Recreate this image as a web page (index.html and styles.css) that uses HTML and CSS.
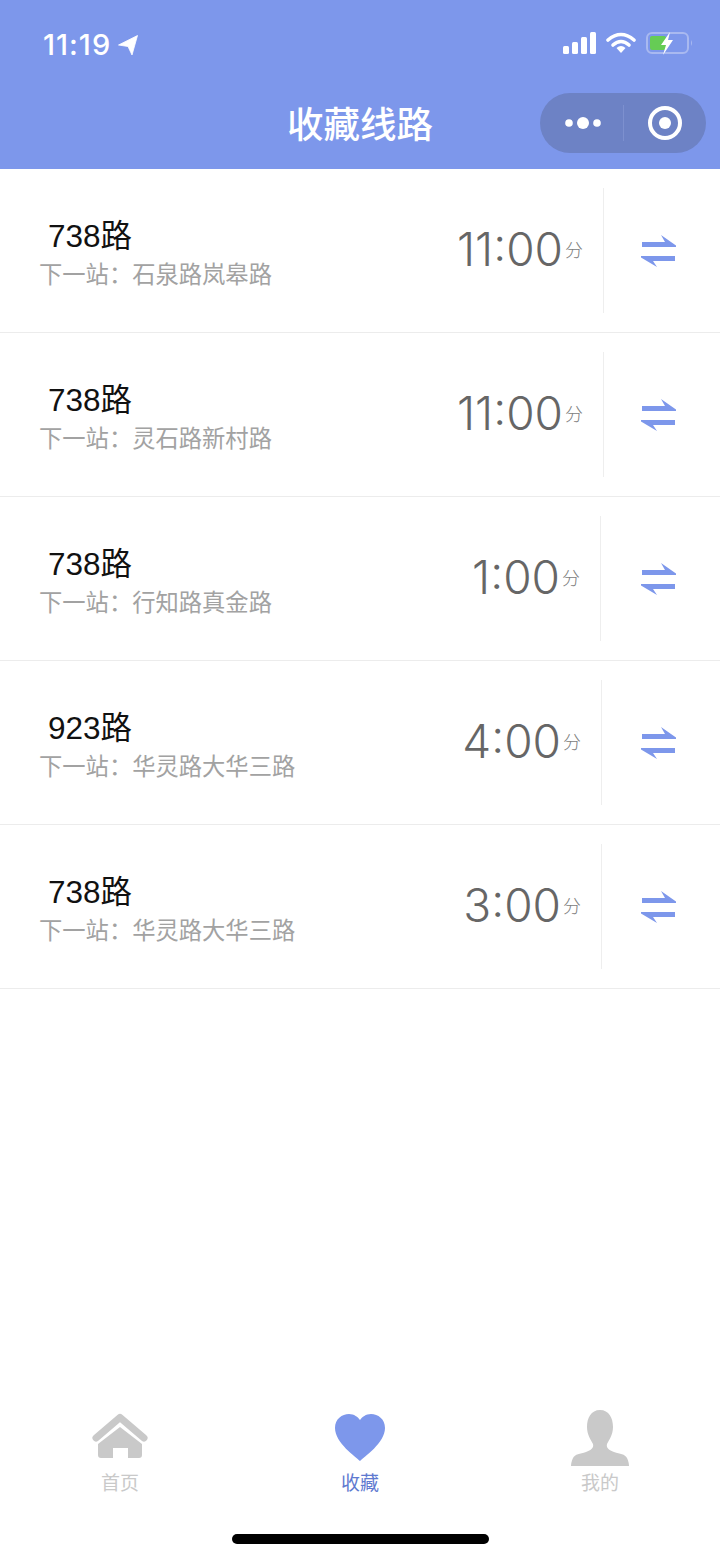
FILE: index.html
```html
<!DOCTYPE html>
<html lang="zh-CN">
<head>
<meta charset="utf-8">
<title>收藏线路</title>
<link rel="stylesheet" href="styles.css">
</head>
<body>
<div class="page">
  <header class="header">
    <div class="status">
      <div class="status-left">
        <span class="clock">11:19</span>
        <svg class="loc" width="20" height="20" viewBox="0 0 20 20"><path d="M19.500 0.500 L0.500 10 L10 11.500 L14 20 Z" fill="#fff" stroke="#fff" stroke-width="0.800" stroke-linejoin="round"/></svg>
      </div>
      <div class="status-right">
        <svg width="34" height="22" viewBox="0 0 34 22"><rect x="0" y="14" width="6" height="8" rx="1.500" fill="#fff"/><rect x="9" y="10" width="6" height="12" rx="1.500" fill="#fff"/><rect x="18" y="5" width="6" height="17" rx="1.500" fill="#fff"/><rect x="27" y="0" width="6" height="22" rx="1.500" fill="#fff"/></svg>
        <svg width="30" height="22" viewBox="0 0 30 22"><path d="M2 8 Q15 -3 28 8" fill="none" stroke="#fff" stroke-width="3.600" stroke-linecap="round"/><path d="M7 13 Q15 6 23 13" fill="none" stroke="#fff" stroke-width="3.600" stroke-linecap="round"/><path d="M10.500 16 Q15 12 19.500 16 L15 21 Z" fill="#fff"/></svg>
        <svg width="48" height="24" viewBox="0 0 48 24"><rect x="2" y="2" width="41" height="20" rx="5" fill="none" stroke="#a9b9f0" stroke-width="2"/><rect x="5" y="5" width="16" height="14" rx="2" fill="#66cc55"/><path d="M46 9 Q48 12 46 15 Z" fill="#a9b9f0"/><path d="M25 1 L16 14 L21 14 L18 24 L28 9 L23 9 Z" fill="#fff"/></svg>
      </div>
    </div>
    <div class="nav">
      <h1 class="nav-title">收藏线路</h1>
      <div class="capsule">
        <div class="capsule-cell">
          <svg class="dots" width="38" height="14" viewBox="0 0 38 14"><circle cx="5" cy="7" r="3.800" fill="#fff"/><circle cx="19" cy="7" r="6" fill="#fff"/><circle cx="33" cy="7" r="3.800" fill="#fff"/></svg>
        </div>
        <span class="capsule-line"></span>
        <div class="capsule-cell">
          <svg width="36" height="36" viewBox="0 0 36 36"><circle cx="18" cy="18" r="15" fill="none" stroke="#fff" stroke-width="4"/><circle cx="18" cy="18" r="6" fill="#fff"/></svg>
        </div>
      </div>
    </div>
  </header>

  <main class="list">
    <div class="row">
      <div class="info"><div class="line-name">738路</div><div class="next">下一站：石泉路岚皋路</div></div>
      <div class="time"><span class="num">11:00</span><span class="unit">分</span></div>
      <div class="swap swap-a"><svg class="swap-icon" width="38" height="34" viewBox="0 0 38 34"><use href="#swap"/></svg></div>
    </div>
    <div class="row">
      <div class="info"><div class="line-name">738路</div><div class="next">下一站：灵石路新村路</div></div>
      <div class="time"><span class="num">11:00</span><span class="unit">分</span></div>
      <div class="swap swap-a"><svg class="swap-icon" width="38" height="34" viewBox="0 0 38 34"><use href="#swap"/></svg></div>
    </div>
    <div class="row">
      <div class="info"><div class="line-name">738路</div><div class="next">下一站：行知路真金路</div></div>
      <div class="time"><span class="num">1:00</span><span class="unit">分</span></div>
      <div class="swap swap-b"><svg class="swap-icon" width="38" height="34" viewBox="0 0 38 34"><use href="#swap"/></svg></div>
    </div>
    <div class="row">
      <div class="info"><div class="line-name">923路</div><div class="next">下一站：华灵路大华三路</div></div>
      <div class="time"><span class="num">4:00</span><span class="unit">分</span></div>
      <div class="swap swap-c"><svg class="swap-icon" width="38" height="34" viewBox="0 0 38 34"><use href="#swap"/></svg></div>
    </div>
    <div class="row">
      <div class="info"><div class="line-name">738路</div><div class="next">下一站：华灵路大华三路</div></div>
      <div class="time"><span class="num">3:00</span><span class="unit">分</span></div>
      <div class="swap swap-c"><svg class="swap-icon" width="38" height="34" viewBox="0 0 38 34"><use href="#swap"/></svg></div>
    </div>
  </main>

  <nav class="tabs">
    <div class="tab">
      <svg width="60" height="56" viewBox="0 0 60 56"><path d="M6 28 L30 7.500 L54 28" fill="none" stroke="#c9c9c9" stroke-width="7" stroke-linecap="round" stroke-linejoin="round"/><path d="M30 17 L52 34 V45 Q52 48 49 48 H38 V38 H23 V48 H11 Q8 48 8 45 V34 Z" fill="#c9c9c9"/></svg>
      <span class="tab-label">首页</span>
    </div>
    <div class="tab tab-on">
      <svg width="60" height="56" viewBox="0 0 60 56"><path d="M30 51 C26 47 5 33 5 18 C5 9 12 4 19 4 C24 4 28 7 30 10 C32 7 36 4 41 4 C48 4 55 9 55 18 C55 33 34 47 30 51 Z" fill="#7d97eb"/></svg>
      <span class="tab-label">收藏</span>
    </div>
    <div class="tab">
      <svg width="60" height="56" viewBox="0 0 60 56"><path d="M30 0 C39 0 43 8 43 17 C43 25 39 30 37 34 C36 38 39 40 44 42 C50 44 55 44 57 48 C58 50 59 53 59 56 H1 C1 53 2 50 3 48 C5 44 10 44 16 42 C21 40 24 38 23 34 C21 30 17 25 17 17 C17 8 21 0 30 0 Z" fill="#c9c9c9"/></svg>
      <span class="tab-label">我的</span>
    </div>
  </nav>
  <div class="home-bar"><span class="home-indicator"></span></div>
</div>
<svg class="defs" width="0" height="0"><defs><g id="swap" fill="#7d97eb"><path d="M2 9 H25 L21 2 L36 12.500 V14 H2 Z"/><path d="M35 23 V28 H13 L17 34 L1 24.500 V23 Z"/></g></defs></svg>
</body>
</html>
```

FILE: styles.css
```css
* { box-sizing: border-box; }
html, body { margin: 0; padding: 0; background: #fff; }
body { font-family: "Liberation Sans", "Noto Sans CJK SC", sans-serif; }
.page { width: 720px; height: 1559px; display: flex; flex-direction: column; overflow: hidden; }
.defs { display: block; height: 0; }

.header { height: 169px; flex: none; background: #7d97eb; color: #fff; display: flex; flex-direction: column; }
.status { height: 88px; padding: 31px 27px 0 43px; display: flex; justify-content: space-between; align-items: flex-start; }
.status-left { display: flex; align-items: center; gap: 7px; }
.clock { font-family: Inter, "Liberation Sans", sans-serif; font-size: 29px; font-weight: 500; line-height: 28px; letter-spacing: 1px; }
.status-right { display: flex; align-items: center; gap: 9px; }
.nav { position: relative; flex: 1; display: flex; justify-content: center; }
.nav-title { margin: 0; font-family: "Noto Sans CJK SC", sans-serif; font-size: 36.500px; font-weight: 500; line-height: 69px; }
.capsule { position: absolute; left: 540px; top: 5px; width: 166px; height: 60px; border-radius: 30px; background: #6d82c5; display: flex; align-items: center; }
.capsule-cell { flex: 1; display: flex; align-items: center; justify-content: center; }
.dots { margin-left: 3px; }
.capsule-line { width: 1px; height: 36px; background: #7d90cf; }

.list { flex: none; display: flex; flex-direction: column; }
.row { height: 164px; border-bottom: 1px solid #ececec; display: flex; align-items: center; padding-left: 39px; }
.info { flex: 1; padding-top: 4px; }
.line-name { padding-left: 9px; color: #111; font-size: 31.500px; line-height: 41px; font-family: "Liberation Sans", "Noto Sans CJK SC", sans-serif; }
.next { color: #a2a2a2; font-family: "Noto Sans CJK SC", sans-serif; font-size: 23.300px; line-height: 32px; }
.time { display: flex; align-items: center; color: #666; padding: 0 20px 4px 0; }
.num { font-family: Inter, sans-serif; font-weight: 300; font-size: 46px; line-height: 58px; }
.unit { font-family: "Noto Sans CJK SC", sans-serif; font-size: 18px; font-weight: 300; color: #808080; margin-left: 2px; }
.swap { height: 125px; border-left: 1px solid #eeeeee; display: flex; align-items: center; justify-content: flex-end; padding-right: 42px; margin-bottom: 1px; }
.swap-a { width: 117px; }
.swap-b { width: 120px; }
.swap-c { width: 119px; }

.tabs { margin-top: auto; height: 86px; flex: none; display: flex; }
.tab { flex: 1; display: flex; flex-direction: column; align-items: center; justify-content: flex-end; gap: 2px; color: #c9c9c9; }
.tab-on { color: #5f7ad0; }
.tab-label { font-family: "Noto Sans CJK SC", sans-serif; font-size: 19px; font-weight: 400; line-height: 28px; }
.home-bar { height: 63px; flex: none; display: flex; justify-content: center; padding-top: 38px; }
.home-indicator { width: 257px; height: 10px; border-radius: 5px; background: #000; }
```
